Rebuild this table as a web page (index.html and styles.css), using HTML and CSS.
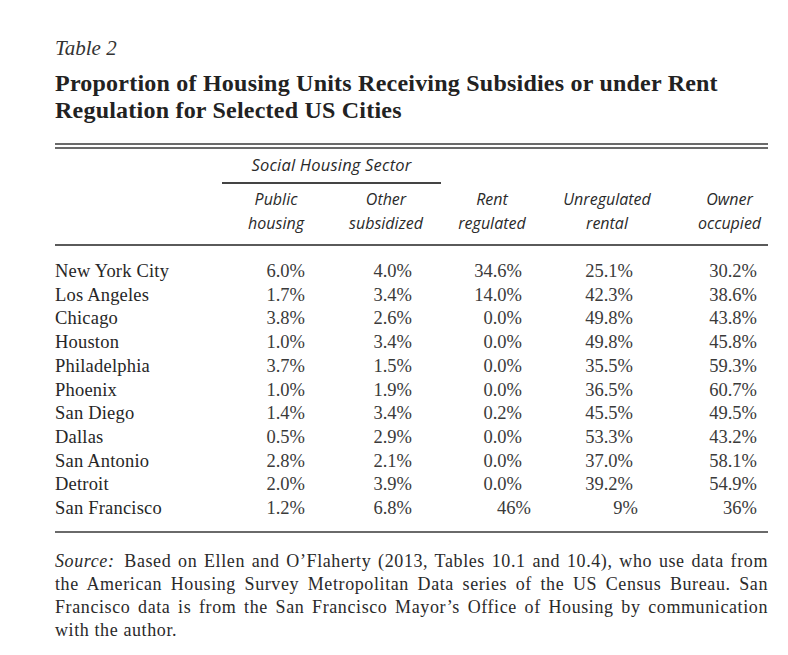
FILE: index.html
```html
<!DOCTYPE html>
<html>
<head>
<meta charset="utf-8">
<link rel="stylesheet" href="styles.css">
</head>
<body>
<div class="page">
  <div class="label">Table 2</div>
  <h1 class="title">Proportion of Housing Units Receiving Subsidies or under Rent Regulation for Selected US Cities</h1>
  <div class="table">
    <div class="group-row">
      <div class="group">Social Housing Sector</div>
    </div>
    <div class="head-row">
      <div class="hc c1"></div>
      <div class="hc c2">Public<br>housing</div>
      <div class="hc c3">Other<br>subsidized</div>
      <div class="hc c4">Rent<br>regulated</div>
      <div class="hc c5">Unregulated<br>rental</div>
      <div class="hc c6">Owner<br>occupied</div>
    </div>
    <div class="body">
      <div class="row"><div class="city">New York City</div><div class="v c2">6.0%</div><div class="v c3">4.0%</div><div class="v c4">34.6%</div><div class="v c5">25.1%</div><div class="v c6">30.2%</div></div>
      <div class="row"><div class="city">Los Angeles</div><div class="v c2">1.7%</div><div class="v c3">3.4%</div><div class="v c4">14.0%</div><div class="v c5">42.3%</div><div class="v c6">38.6%</div></div>
      <div class="row"><div class="city">Chicago</div><div class="v c2">3.8%</div><div class="v c3">2.6%</div><div class="v c4">0.0%</div><div class="v c5">49.8%</div><div class="v c6">43.8%</div></div>
      <div class="row"><div class="city">Houston</div><div class="v c2">1.0%</div><div class="v c3">3.4%</div><div class="v c4">0.0%</div><div class="v c5">49.8%</div><div class="v c6">45.8%</div></div>
      <div class="row"><div class="city">Philadelphia</div><div class="v c2">3.7%</div><div class="v c3">1.5%</div><div class="v c4">0.0%</div><div class="v c5">35.5%</div><div class="v c6">59.3%</div></div>
      <div class="row"><div class="city">Phoenix</div><div class="v c2">1.0%</div><div class="v c3">1.9%</div><div class="v c4">0.0%</div><div class="v c5">36.5%</div><div class="v c6">60.7%</div></div>
      <div class="row"><div class="city">San Diego</div><div class="v c2">1.4%</div><div class="v c3">3.4%</div><div class="v c4">0.2%</div><div class="v c5">45.5%</div><div class="v c6">49.5%</div></div>
      <div class="row"><div class="city">Dallas</div><div class="v c2">0.5%</div><div class="v c3">2.9%</div><div class="v c4">0.0%</div><div class="v c5">53.3%</div><div class="v c6">43.2%</div></div>
      <div class="row"><div class="city">San Antonio</div><div class="v c2">2.8%</div><div class="v c3">2.1%</div><div class="v c4">0.0%</div><div class="v c5">37.0%</div><div class="v c6">58.1%</div></div>
      <div class="row"><div class="city">Detroit</div><div class="v c2">2.0%</div><div class="v c3">3.9%</div><div class="v c4">0.0%</div><div class="v c5">39.2%</div><div class="v c6">54.9%</div></div>
      <div class="row"><div class="city">San Francisco</div><div class="v c2">1.2%</div><div class="v c3">6.8%</div><div class="v c4 sf">46%</div><div class="v c5 sf">9%</div><div class="v c6">36%</div></div>
    </div>
  </div>
  <p class="source"><span class="src-label">Source:</span> Based on Ellen and O’Flaherty (2013, Tables 10.1 and 10.4), who use data from the American Housing Survey Metropolitan Data series of the US Census Bureau. San Francisco data is from the San Francisco Mayor’s Office of Housing by communication with the author.</p>
</div>
</body>
</html>
```
FILE: styles.css
```css
html, body {
  margin: 0;
  padding: 0;
  background: #ffffff;
}
.page {
  width: 713px;
  padding: 36px 0 0 55px;
  font-family: "Liberation Serif", "DejaVu Serif", serif;
  color: #262626;
}
.label {
  font-style: italic;
  font-size: 21px;
  line-height: 24px;
  color: #333;
}
.title {
  margin: 10px 0 0 0;
  font-size: 24px;
  line-height: 27px;
  letter-spacing: 0.22px;
  font-weight: bold;
  color: #222;
}
.table {
  margin-top: 19px;
  border-top: 2px solid #6a6a6a;
  padding-top: 2px;
}
.table::before {
  content: "";
  display: block;
  border-top: 2px solid #6a6a6a;
}
.group-row {
  display: grid;
  grid-template-columns: 167px 219px 1fr;
  padding-top: 6px;
}
.group {
  grid-column: 2;
  text-align: center;
  font-family: "Open Sans", "Lato", sans-serif;
  font-style: italic;
  font-weight: 500;
  font-size: 16.5px;
  line-height: 20px;
  letter-spacing: 0.2px;
  padding-bottom: 7px;
  border-bottom: 2px solid #444;
  color: #2a2a2a;
}
.head-row, .row {
  display: grid;
  grid-template-columns: 166px 110px 110px 102px 128px 97px;
}
.head-row {
  padding-top: 3px;
  padding-bottom: 9px;
  border-bottom: 2px solid #5a5a5a;
}
.hc {
  font-family: "Open Sans", "Lato", sans-serif;
  font-style: italic;
  font-weight: 500;
  font-size: 16px;
  line-height: 24px;
  text-align: center;
  color: #2a2a2a;
}
.hc.c6 {
  padding-left: 20px;
}
.body {
  padding-top: 14px;
  padding-bottom: 10px;
  border-bottom: 2px solid #6a6a6a;
}
.row {
  font-size: 18.5px;
  line-height: 23.7px;
}
.city {
  color: #262626;
  letter-spacing: 0.2px;
}
.v {
  text-align: right;
  color: #3a3a3a;
}
.v.c2 { padding-right: 26px; }
.v.c3 { padding-right: 29px; }
.v.c4 { padding-right: 21px; }
.v.c5 { padding-right: 38px; }
.v.c6 { padding-right: 11px; }
.v.c4.sf { padding-right: 12px; }
.v.c5.sf { padding-right: 33px; }
.source {
  margin: 17px 0 0 0;
  font-size: 18px;
  line-height: 23px;
  letter-spacing: 0.6px;
  text-align: justify;
  color: #2a2a2a;
}
.src-label {
  font-style: italic;
  margin-right: 3px;
}
```
